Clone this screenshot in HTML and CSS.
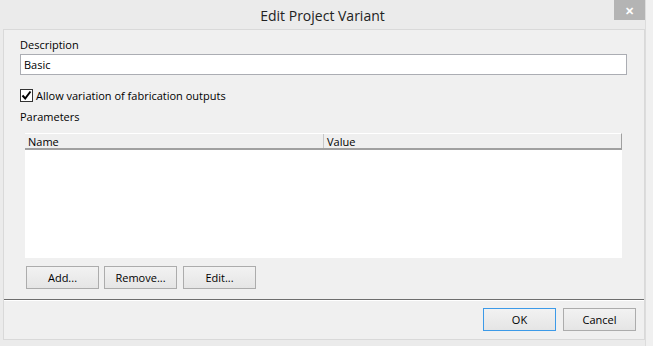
FILE: index.html
```html
<html>
<head>
<title>Edit Project Variant</title>
<link rel="stylesheet" href="styles.css">
</head>
<body>
<div class="window">
  <div class="titlebar">
    <span class="title">Edit Project Variant</span>
    <span class="close">&#x2715;</span>
  </div>
  <div class="client">
    <div class="content">
      <label class="label">Description</label>
      <input class="textbox" type="text" value="Basic">
      <label class="check">
        <span class="box">
          <svg width="11" height="11" viewBox="0 0 11 11"><path d="M1.5 5.5 L4.2 8.5 L9.5 1.5" fill="none" stroke="#000" stroke-width="2"/></svg>
        </span>
        Allow variation of fabrication outputs
      </label>
      <div class="label params">Parameters</div>
      <div class="listview">
        <div class="header">
          <div class="col col-name">Name</div>
          <div class="col col-value">Value</div>
        </div>
        <div class="rows"></div>
      </div>
      <div class="buttons">
        <button class="btn">Add...</button>
        <button class="btn">Remove...</button>
        <button class="btn btn-edit">Edit...</button>
      </div>
    </div>
    <div class="footer">
      <button class="btn btn-default">OK</button>
      <button class="btn">Cancel</button>
    </div>
  </div>
</div>
<div class="edge"></div>
</body>
</html>
```
FILE: styles.css
```css
body {
  margin: 0;
  display: flex;
  height: 346px;
  background: #ebebeb;
  font-family: "Open Sans", "Noto Sans", sans-serif;
  font-size: 11px;
  color: #000;
}
.window {
  width: 645px;
  display: flex;
  flex-direction: column;
  background: #ebebeb;
}
.edge {
  flex: 1;
  border-left: 1px solid #dcdcdc;
  background: #f0f0f0;
}
.titlebar {
  height: 29px;
  display: flex;
  justify-content: center;
  align-items: center;
  position: relative;
}
.title {
  font-size: 14px;
  color: #222;
  margin-top: 1px;
}
.close {
  position: absolute;
  top: 0;
  right: 0;
  width: 31px;
  height: 20px;
  background: #b4b4b4;
  color: #fff;
  font-size: 11px;
  font-weight: bold;
  display: flex;
  align-items: center;
  justify-content: center;
}
.client {
  margin: 0 0 6px 3px;
  flex: 1;
  border: 1px solid #d9d9d9;
  background: #f0f0f0;
  display: flex;
  flex-direction: column;
}
.content {
  padding: 7px 16px 0 16px;
  display: flex;
  flex-direction: column;
  height: 270px;
  box-sizing: border-box;
  border-bottom: 1px solid #6d6d6d;
  box-shadow: 0 1px 0 #ffffff;
}
.label {
  line-height: 16px;
}
.textbox {
  margin-top: 1px;
  width: 607px;
  height: 21px;
  box-sizing: border-box;
  border: 1px solid #abadb3;
  padding: 0 3px;
  font-family: inherit;
  font-size: 11px;
  outline: none;
}
.check {
  margin-top: 14px;
  display: flex;
  align-items: center;
  gap: 3px;
  line-height: 13px;
}
.box {
  width: 11px;
  height: 11px;
  border: 1px solid #333;
  background: #fff;
  display: flex;
}
.params {
  margin-top: 7px;
}
.listview {
  margin: 8px 0 0 5px;
  width: 597px;
  display: flex;
  flex-direction: column;
}
.header {
  display: flex;
  height: 17px;
  background: #efefef;
  border-top: 1px solid #fff;
  border-bottom: 2px solid #a0a0a0;
  border-right: 1px solid #a0a0a0;
  box-sizing: border-box;
}
.col {
  line-height: 15px;
  padding-left: 3px;
}
.col-name {
  width: 295px;
  border-right: 1px solid #c8c8c8;
}
.rows {
  height: 108px;
  background: #fff;
}
.buttons {
  margin: 8px 0 0 6px;
  display: flex;
  gap: 5px;
}
.btn {
  width: 73px;
  height: 23px;
  border: 1px solid #acacac;
  background: linear-gradient(#f2f2f2, #e5e5e5);
  font-family: inherit;
  font-size: 11px;
  color: #000;
  padding: 0;
}
.btn-edit {
  margin-left: 1px;
}
.footer {
  display: flex;
  justify-content: flex-end;
  gap: 7px;
  padding: 8px 8px 0 0;
}
.btn-default {
  border-color: #3c9ae8;
}
```
